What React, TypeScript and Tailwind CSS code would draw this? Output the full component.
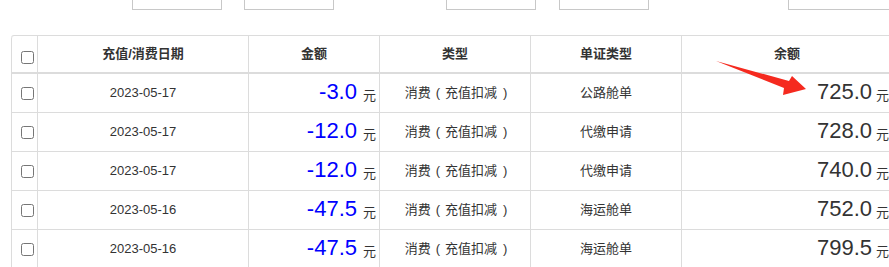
import React from 'react';

type Row = { date: string; amount: string; doc: string; balance: string };

const rows: Row[] = [
  { date: '2023-05-17', amount: '-3.0', doc: '公路舱单', balance: '725.0' },
  { date: '2023-05-17', amount: '-12.0', doc: '代缴申请', balance: '728.0' },
  { date: '2023-05-17', amount: '-12.0', doc: '代缴申请', balance: '740.0' },
  { date: '2023-05-16', amount: '-47.5', doc: '海运舱单', balance: '752.0' },
  { date: '2023-05-16', amount: '-47.5', doc: '海运舱单', balance: '799.5' },
];

const font = { fontFamily: '"Liberation Sans", "Noto Sans CJK SC", sans-serif' };

function Box({ className }: { className: string }) {
  return <div className={`h-[10px] shrink-0 border-x border-b border-[#c8c8c8] ${className}`} />;
}

export default function App() {
  return (
    <div className="relative h-[267px] w-[889px] overflow-hidden bg-white text-[13px] text-[#333]" style={font}>
      <div className="flex">
        <Box className="ml-[132px] w-[90px]" />
        <Box className="ml-[22px] w-[90px]" />
        <Box className="ml-[112px] w-[90px]" />
        <Box className="ml-[23px] w-[90px]" />
        <Box className="ml-[139px] w-[120px]" />
      </div>

      <div className="ml-[11px] mt-[25px] w-[881px] rounded-tl-[3px] border-t border-[#dcdcdc]">
        <div className="grid h-[38px] grid-cols-[26px_211px_131px_151px_151px_211px] font-bold">
          <div className="flex items-center rounded-tl-[3px] border-b-2 border-l border-[#dcdcdc] pl-[9px] pt-[6px]">
            <input type="checkbox" className="m-0 h-[13px] w-[13px]" />
          </div>
          <div className="flex items-center justify-center border-b-2 border-l border-[#dcdcdc]">充值/消费日期</div>
          <div className="flex items-center justify-center border-b-2 border-l border-[#dcdcdc]">金额</div>
          <div className="flex items-center justify-center border-b-2 border-l border-[#dcdcdc]">类型</div>
          <div className="flex items-center justify-center border-b-2 border-l border-[#dcdcdc]">单证类型</div>
          <div className="flex items-center justify-center border-b-2 border-l border-[#dcdcdc]">余额</div>
        </div>

        {rows.map((r, i) => (
          <div key={i} className="grid h-[39px] grid-cols-[26px_211px_131px_151px_151px_211px]">
            <div className="flex items-center border-b border-l border-[#dcdcdc] pl-[9px]">
              <input type="checkbox" className="m-0 h-[13px] w-[13px]" />
            </div>
            <div className="flex items-center justify-center border-b border-l border-[#dcdcdc] pb-[1px]">{r.date}</div>
            <div className="flex items-center justify-end border-b border-l border-[#dcdcdc] pb-[2px] pr-[3px]">
              <span className="text-[22px] leading-none text-[#0000ff]">{r.amount}</span>
              <span className="ml-[6px] mt-[6px] text-[13px] leading-none">元</span>
            </div>
            <div className="flex items-center justify-center border-b border-l border-[#dcdcdc] pb-[1px] pl-[2px]">
              消费<span className="mx-[5px]">(</span>充值扣减<span className="ml-[6px]">)</span>
            </div>
            <div className="flex items-center justify-center border-b border-l border-[#dcdcdc] pb-[1px]">{r.doc}</div>
            <div className="flex items-center justify-end border-b border-l border-[#dcdcdc] pb-[2px] pr-[3px]">
              <span className="text-[22px] leading-none">{r.balance}</span>
              <span className="ml-[4px] mt-[6px] text-[13px] leading-none">元</span>
            </div>
          </div>
        ))}
      </div>

      <svg className="pointer-events-none absolute left-0 top-0" width="889" height="267">
        <polygon points="716,61 789,81 792,76 806,89 783,95 784,88" fill="#f52a1f" />
      </svg>
    </div>
  );
}
